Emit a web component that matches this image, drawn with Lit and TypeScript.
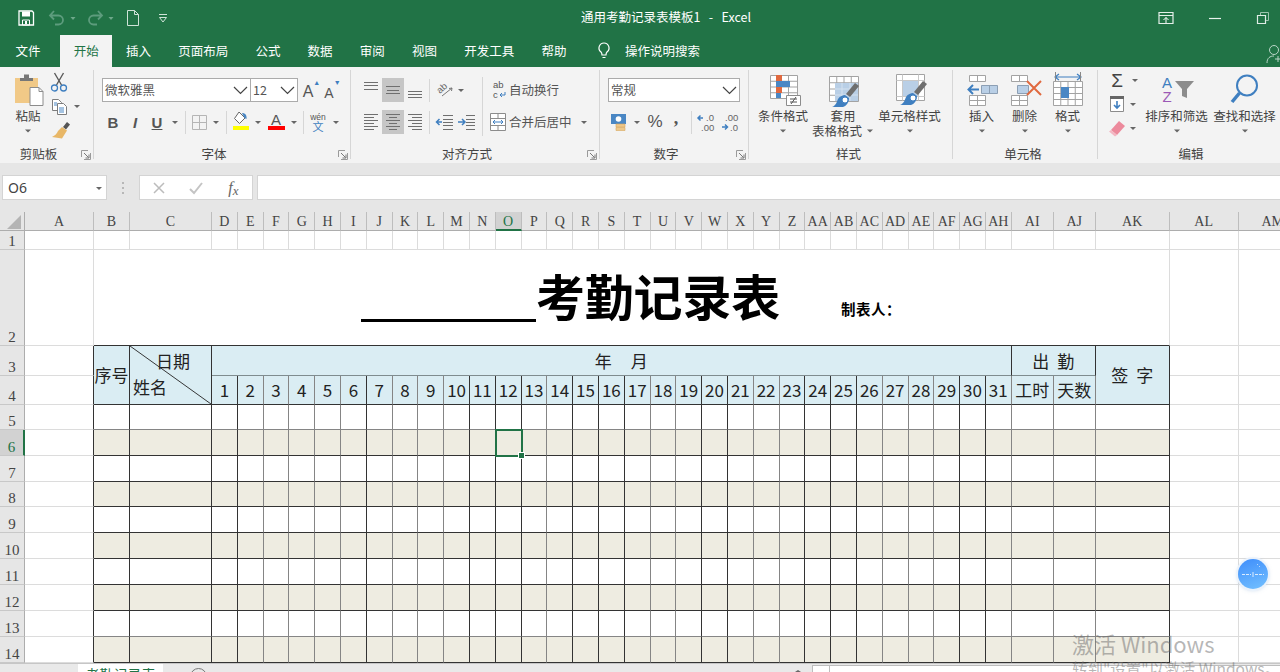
import { LitElement, css, html, svg } from "lit";
import { customElement } from "lit/decorators.js";

const GRAY = "#6f6f6f";

// every icon sets its own slot size, so the ribbon rows stay plain flex rows
const ic = (w: number, h: number, body: unknown) =>
  html`<svg class="ic" width=${w} height=${h} viewBox="0 0 ${w} ${h}">${body}</svg>`;

const caret = (w = 10, h = 24) =>
  ic(w, h, svg`<path d="M${w / 2 - 3} ${h / 2 - 1}h6l-3 3z" fill="#666"/>`);

const chevron = () =>
  ic(18, 22, svg`<path d="M2 8l6.5 6.5L15 8" fill="none" stroke="#444" stroke-width="1.2"/>`);

const launcher = () =>
  ic(10, 10, svg`<path d="M.5 7V.5H7M9.5 3v6.5H3" fill="none" stroke="#9a9a9a"/><path d="M3 3l4.5 4.5M8 4.5V8H4.5" fill="none" stroke="#777"/>`);

const lines = (ys: number[], spans: [number, number][]) =>
  svg`<path d=${ys.map((y, i) => `M${spans[i % spans.length][0]} ${y + 0.5}H${spans[i % spans.length][1]}`).join("")} stroke=${GRAY} fill="none"/>`;

const gridBox = (x: number, y: number, w: number, h: number, nx: number, ny: number) => {
  let d = `M${x + 0.5} ${y + 0.5}h${w}v${h}h${-w}z`;
  for (let i = 1; i < nx; i++) d += `M${x + 0.5 + (w * i) / nx} ${y}v${h}`;
  for (let i = 1; i < ny; i++) d += `M${x} ${y + 0.5 + (h * i) / ny}h${w}`;
  return svg`<path d=${d} fill="#fff" stroke="#a3a3a3"/>`;
};

const brush = (dx: number, dy: number) => svg`<g transform="translate(${dx} ${dy})">
  <path d="M24 0l4 3-9 11-4-3z" fill="#6e6e6e"/>
  <path d="M14 12l4 3c0 5-3 8-6 9H1c4-1 5-6 6-8 2-3 5-4 7-4z" fill="#3f7fc0"/>
  <circle cx="14" cy="17" r="3" fill="#fff" stroke="#3f7fc0"/>
</g>`;

const ICONS = {
  save: ic(18, 18, svg`<path d="M2 2h13l1.500 1.500V16H2z" fill="none" stroke="#fff" stroke-width="1.300"/><path d="M5 2.500h8v5H5z" fill="#fff"/><path d="M5.500 11h7v5h-7z" fill="none" stroke="#fff"/><path d="M8 12h2v3H8z" fill="#fff"/>`),
  undo: ic(20, 18, svg`<path d="M7 2L3 6.500l4 4M3.500 6.500h8a4.500 4.500 0 0 1 0 9H8" fill="none" stroke="#5d9c7d" stroke-width="1.800"/>`),
  redo: ic(20, 18, svg`<path d="M13 2l4 4.500-4 4M16.500 6.500h-8a4.500 4.500 0 0 0 0 9H12" fill="none" stroke="#5d9c7d" stroke-width="1.800"/>`),
  doc: ic(16, 18, svg`<path d="M2.500 1.500h7l4 4v11h-11zM9.500 1.500v4h4" fill="none" stroke="#cfe3d8"/>`),
  more: ic(14, 12, svg`<path d="M3 2.500h8" stroke="#cfe3d8"/><path d="M3.500 5.500h7L7 10z" fill="none" stroke="#cfe3d8"/>`),
  qcaret: ic(8, 12, svg`<path d="M1.500 5h5L4 8z" fill="#6ea88a"/>`),
  ribbonMode: ic(16, 14, svg`<path d="M1 1.500h14v11H1z" fill="none" stroke="#e4efe9" stroke-width="1.200"/><path d="M1 4.500h14" stroke="#e4efe9"/><path d="M8 12V6.500M5.500 9L8 6.500 10.500 9" fill="none" stroke="#fff"/>`),
  minimize: ic(14, 14, svg`<path d="M1 7.500h12" stroke="#e8f2ec" stroke-width="1.200"/>`),
  restore: ic(14, 14, svg`<path d="M1.500 4.500h8v8h-8z" fill="none" stroke="#dfece5" stroke-width="1.200"/><path d="M4.500 4V1.500h8v8H10" fill="none" stroke="#9dc3ae"/>`),
  person: ic(14, 20, svg`<circle cx="8" cy="6" r="4.500" fill="none" stroke="#b9d5c6"/><path d="M1 19c0-5 3-7 7-7M9 15h6M12 12v6" fill="none" stroke="#b9d5c6"/>`),
  bulb: ic(14, 20, svg`<path d="M7 3a5 5 0 0 0-3 9c.6.6 1 1.500 1 3h4c0-1.500.4-2.400 1-3a5 5 0 0 0-3-9zM5.500 17.500h3" fill="none" stroke="#fff" stroke-width="1.200"/>`),

  paste: ic(42, 36, svg`<path d="M8 6h23v25H8z" fill="#f1c987"/><path d="M13 6h13v3H13z" fill="#777"/><path d="M17 2.500h5V6h-5z" fill="#777"/>
    <path d="M23 15.500h9l4 4v14H23z" fill="#fff" stroke="#8c8c8c"/><path d="M32 15.500v4h4" fill="none" stroke="#8c8c8c"/>`),
  cut: ic(20, 24, svg`<path d="M5.500 3l7 12M14.500 3l-7 12" stroke="#5a5a5a" stroke-width="1.400"/><circle cx="5.500" cy="18" r="3" fill="none" stroke="#3f7fc0" stroke-width="1.300"/><circle cx="14.500" cy="18" r="3" fill="none" stroke="#3f7fc0" stroke-width="1.300"/>`),
  copy: ic(22, 24, svg`<path d="M3.500 5.500h6l3 3v8h-9z" fill="#fff" stroke="#7d7d7d"/><path d="M8.500 9.500h6l3 3v8h-9z" fill="#fff" stroke="#7d7d7d"/><path d="M5 9h3M5 11h3M10 14h5M10 16h5M10 18h5" stroke="#4a87c4"/>`),
  brush: ic(22, 24, svg`<path d="M14 9l4-5 3 2.500-4 5z" fill="#555"/><path d="M13 9l5 3.500-5 8-10-1.500c3-1.500 5-3.500 6-6z" fill="#e8b767"/>`),

  borders: ic(20, 24, svg`<path d="M3.500 5.500h14v14h-14zM10.500 5.500v14M3.500 12.500h14" fill="none" stroke="#b5b5b5"/>`),
  fill: ic(22, 24, svg`<path d="M9 2l6 6-5.500 5.500-5-5z" fill="#fff" stroke="#666"/><path d="M12 3c3 0 5 2 4.500 6l-2-1z" fill="#4a87c4"/><path d="M3 16h16v4H3z" fill="#ffff00"/>`),
  fontColor: ic(24, 24, svg`<text x="12" y="15" text-anchor="middle" font-family="Liberation Sans" font-size="15" fill="#555">A</text><path d="M4 16h17v4H4z" fill="#ff0000"/>`),
  wen: ic(22, 24, svg`<text x="11" y="9.500" text-anchor="middle" font-family="Liberation Sans" font-size="8.500" fill="#555">wén</text><text x="11" y="21" text-anchor="middle" font-family="Noto Sans CJK SC" font-size="11" fill="#3f7fc0">文</text>`),

  alignTop: ic(22, 24, lines([4, 7, 11], [[4, 18]])),
  alignMiddle: ic(22, 24, lines([8, 12, 15], [[4, 18], [5, 17], [4, 18]])),
  alignBottom: ic(22, 24, lines([13, 16, 19], [[4, 18]])),
  textLeft: ic(22, 24, lines([4, 7, 10, 13, 16, 19], [[4, 18], [4, 14]])),
  textCenter: ic(22, 24, lines([4, 7, 10, 13, 16, 19], [[4, 18], [7, 15]])),
  textRight: ic(22, 24, lines([4, 7, 10, 13, 16, 19], [[4, 18], [8, 18]])),
  orient: ic(24, 24, svg`<text transform="translate(7 16) rotate(-42)" font-family="Liberation Sans" font-size="9.500" fill="#666">ab</text><path d="M9 18l10-8M19 10l-3 .5M19 10l-.5 3" fill="none" stroke="#777"/>`),
  outdent: ic(22, 24, svg`${lines([5, 9, 12, 15, 19], [[10, 20]])}<path d="M9 12H4M6.500 9L3.500 12l3 3" fill="none" stroke="#3f7fc0" stroke-width="1.500"/>`),
  indent: ic(22, 24, svg`${lines([5, 9, 12, 15, 19], [[11, 20]])}<path d="M3 12h6M7 9l3 3-3 3" fill="none" stroke="#3f7fc0" stroke-width="1.500"/>`),
  wrap: ic(22, 24, svg`<text x="6" y="10" font-family="Liberation Sans" font-size="9.500" fill="#555">ab</text><text x="6" y="20" font-family="Liberation Sans" font-size="9.500" fill="#555">c</text><path d="M18 14v3h-5M15 15l-2 2 2 2" fill="none" stroke="#3f7fc0"/>`),
  merge: ic(22, 24, svg`<path d="M3.500 3.500h15v17h-15zM3.500 8.500h15M3.500 15.500h15M11 3.500v5M11 15.500v5M3.500 8.500v7" fill="#fff" stroke="#8c8c8c"/><path d="M6 12h10M8 10l-2 2 2 2M14 10l2 2-2 2" fill="none" stroke="#3f7fc0"/>`),

  currency: ic(20, 24, svg`<path d="M3 4h15v10H3z" fill="#4a87c4"/><circle cx="10.500" cy="9" r="2.800" fill="#fff"/><path d="M8 14h9v3H8zM8 17.500h9v3H8z" fill="#efc88a" stroke="#d9a95e" stroke-width=".6"/>`),
  decInc: ic(24, 24, svg`<path d="M8 8H3M5.500 5.500L3 8l2.500 2.500" fill="none" stroke="#3f7fc0" stroke-width="1.500"/><text x="11" y="11" font-family="Liberation Sans" font-size="9.500" fill="#666">.0</text><text x="6" y="21" font-family="Liberation Sans" font-size="9.500" fill="#666">.00</text>`),
  decDec: ic(24, 24, svg`<text x="6" y="11" font-family="Liberation Sans" font-size="9.500" fill="#666">.00</text><path d="M3 17h5M6 14.500L8.500 17 6 19.500" fill="none" stroke="#3f7fc0" stroke-width="1.500"/><text x="11" y="21" font-family="Liberation Sans" font-size="9.500" fill="#666">.0</text>`),

  condFormat: ic(36, 36, svg`${gridBox(5, 3, 27, 23, 3, 4)}
    <path d="M11 3h6v6h-6zM11 15h6v6h-6z" fill="#e0693f"/><path d="M11 9h14v6H11zM11 21h5v5h-5z" fill="#4a87c4"/>
    <path d="M21.500 23.500h14v10h-14z" fill="#fff" stroke="#8c8c8c"/><path d="M25 27h7M25 30h7M31 25l-5 7" stroke="#555" fill="none"/>`),
  tableFormat: ic(36, 36, svg`${gridBox(4, 4, 29, 25, 4, 4)}<path d="M10 11h23v18H10z" fill="#b9cfe6"/><path d="M17 11v18M25 11v18M10 17h23M10 23h23" stroke="#d4e1ef"/>${brush(6, 11)}`),
  cellStyles: ic(36, 36, svg`<path d="M4.500 2.500h28v26h-28z" fill="#fff" stroke="#a3a3a3"/><path d="M10.500 2.500v26M26.500 2.500v26M4.500 8.500h28M4.500 24.500h28" stroke="#c8c8c8"/><path d="M11 9h15v15H11z" fill="#b9cfe6"/>${brush(7, 9)}`),
  insert: ic(36, 36, svg`${gridBox(5, 3, 16, 6, 2, 1)}<path d="M17.500 13.500h16v8h-16zM25.500 13.500v8" fill="#b9cfe6" stroke="#8c9fb4"/><path d="M15 17.500H5M9 13l-4.500 4.500L9 22" fill="none" stroke="#3f7fc0" stroke-width="2"/>${gridBox(5, 23, 16, 10, 2, 2)}`),
  del: ic(36, 36, svg`${gridBox(4, 3, 16, 6, 2, 1)}<path d="M10.500 13.500h11v8h-11z" fill="#b9cfe6" stroke="#8c9fb4"/>${gridBox(4, 23, 16, 10, 2, 2)}<path d="M20 9l14 14M34 9L20 23" stroke="#e0693f" stroke-width="2"/>`),
  format: ic(36, 36, svg`<path d="M5 5h26M9 2l-4 3 4 3M27 2l4 3-4 3" fill="none" stroke="#3f7fc0" stroke-width="1.200"/><path d="M5.500 0v9M30.500 0v9" stroke="#888"/>${gridBox(3, 9, 29, 24, 4, 4)}<path d="M11 15h8v11h-8z" fill="#4a87c4"/>`),
  sigma: ic(26, 24, svg`<text x="13" y="19" text-anchor="middle" font-family="Liberation Sans" font-size="19" fill="#444">Σ</text>`),
  fillDown: ic(26, 24, svg`<path d="M6.500 4.500h13v15h-13z" fill="#fff" stroke="#8c8c8c"/><path d="M6 4h14v3H6z" fill="#666"/><path d="M13 9v7M10 13l3 3 3-3" fill="none" stroke="#3f7fc0" stroke-width="1.600"/>`),
  eraser: ic(26, 24, svg`<path d="M15 5l6 5-8 9-6-5z" fill="#ec8a9c"/><path d="M7 14l6 5-2 1.500-6-5z" fill="#f4b6c2"/>`),
  sort: ic(46, 36, svg`<text x="13" y="16" text-anchor="middle" font-family="Liberation Sans" font-size="15" fill="#3f7fc0">A</text><text x="13" y="30" text-anchor="middle" font-family="Liberation Sans" font-size="15" fill="#9b59b6">Z</text><path d="M21 9h19l-7 8v9l-5-2v-7z" fill="#8c8c8c"/>`),
  find: ic(36, 36, svg`<circle cx="20" cy="13.500" r="10" fill="none" stroke="#3f7fc0" stroke-width="2"/><path d="M12.500 21L5 30" stroke="#3f7fc0" stroke-width="3.500"/>`),
  cancel: ic(14, 14, svg`<path d="M2 2l10 10M12 2L2 12" stroke="#bcbcbc" stroke-width="1.500"/>`),
  enter: ic(16, 14, svg`<path d="M2 8l4 4 8-10" fill="none" stroke="#c4c4c4" stroke-width="2"/>`),
  sheetNext: ic(8, 8, svg`<path d="M4 6l-3 2h6z" fill="#666"/>`),
};

const COL_NAMES = [
  "A", "B", "C", "D", "E", "F", "G", "H", "I", "J", "K", "L", "M", "N", "O", "P", "Q", "R", "S", "T",
  "U", "V", "W", "X", "Y", "Z", "AA", "AB", "AC", "AD", "AE", "AF", "AG", "AH", "AI", "AJ", "AK", "AL", "AM",
];
const FIRST_DAY = 5; // grid column of D
const TABLE_FIRST = 3; // grid column of B
const TABLE_LAST = 38; // grid column of AK
const ACTIVE_COL = 16; // grid column of O
const ACTIVE_ROW = 6;
// the screenshot was downscaled, so some rules came out soft and gray
const SOFT_DAYS = new Set([2, 3, 4, 5, 7, 8, 9, 13, 17, 18, 21, 22, 26, 27, 28, 31]);
const SOFT_ROWS = new Set([5, 13]);

@customElement("app-root")
export class AppRoot extends LitElement {
  static styles = css`
    :host {
      display: block;
      width: 1280px;
      height: 672px;
      overflow: hidden;
      position: relative;
      font-family: "Noto Sans CJK SC", "Noto Sans", sans-serif;
      color: #444;
      background: #e6e6e6;
    }
    .ic { display: block; flex: none; }

    .titlebar {
      height: 35px;
      background: #217346;
      display: flex;
      align-items: center;
      color: #fff;
    }
    .qat { display: flex; align-items: center; width: 581px; padding-left: 17px; box-sizing: border-box; }
    .qat .tight { display: flex; align-items: center; gap: 2px; }
    .m8 { margin-left: 8px; }
    .m10 { margin-left: 10px; }
    .m12 { margin-left: 12px; }
    .m15 { margin-left: 15px; }
    .doc-title { font-size: 12.5px; white-space: pre; margin-top: -3px; }
    .win { margin-left: auto; display: flex; align-items: center; gap: 34px; padding-right: 10px; }

    .tabs {
      height: 32px;
      background: #217346;
      display: flex;
      align-items: stretch;
      font-size: 12.5px;
      color: #fff;
      padding-left: 2px;
    }
    .tab { padding: 0 13.6px 2px; display: flex; align-items: center; }
    .tab.file { margin-right: 6px; }
    .tab.on { background: #f3f3f3; color: #217346; }
    .tab.search { gap: 14px; padding-left: 17px; }
    .tabs .person { margin-left: auto; align-self: center; margin-top: 6px; }

    .ribbon { height: 96px; background: #f3f3f3; display: flex; font-size: 12.5px; }
    .group {
      flex: none;
      height: 89px;
      margin-top: 3px;
      display: flex;
      flex-direction: column;
      border-right: 1px solid #d6d6d6;
      box-sizing: border-box;
    }
    .g-clip { width: 94px; }
    .g-font { width: 257px; }
    .g-align { width: 249px; }
    .g-num { width: 149px; }
    .g-style { width: 204px; }
    .g-cell { width: 145px; }
    .g-edit { width: 182px; border-right: none; }
    .body { flex: 1; display: flex; min-height: 0; padding-top: 2px; }
    .label {
      height: 16px;
      margin: 0 0 -3px;
      display: flex;
      align-items: center;
      font-size: 12.5px;
      line-height: 16px;
      color: #444;
    }
    .label span { flex: 1; text-align: center; padding-right: 4px; }
    .g-edit .label span { padding: 0 0 0 4px; }
    .label .ic { margin: 2px 2px 0 0; }

    .big { flex: none; display: flex; flex-direction: column; align-items: center; line-height: 15px; }
    .big .cap { white-space: nowrap; display: flex; align-items: center; }
    .stack { display: flex; flex-direction: column; margin-top: -4px; }
    .stack.low { margin-top: -2px; }
    .row { display: flex; align-items: center; height: 24px; }

    .g-clip .body { padding-left: 7px; }
    .w-paste { width: 42px; }
    .w-52 { width: 52px; }
    .w-68 { width: 68px; }
    .w-65 { width: 65px; }
    .w-43 { width: 43px; }

    .col2 { display: flex; flex-direction: column; gap: 8px; padding-top: 6px; }
    .g-font .body, .g-num .body { padding-left: 8px; }
    .select {
      display: flex;
      align-items: center;
      height: 24px;
      box-sizing: border-box;
      background: #fff;
      border: 1px solid #ababab;
      font-size: 12.5px;
      padding-left: 2px;
      color: #555;
    }
    .select span { flex: 1; margin-top: -2px; }
    .s-font { width: 149px; }
    .s-size { width: 48px; margin-left: -1px; }
    .s-num { width: 132px; }
    .grow-a { font-size: 16px; font-family: "Liberation Sans", sans-serif; color: #555; display: flex; align-items: flex-end; width: 21px; justify-content: center; height: 22px; }
    .grow-a i { font-style: normal; font-size: 7px; color: #3f7fc0; line-height: 8px; align-self: flex-start; }
    .grow-first { margin-left: 3px; }
    .small-a { font-size: 14px; }
    .fmt {
      width: 22px;
      height: 24px;
      display: flex;
      align-items: center;
      justify-content: center;
      font: 700 15px "Liberation Sans", sans-serif;
      color: #555;
    }
    .fmt.i { font-style: italic; }
    .fmt.u { text-decoration: underline; }
    .vsep { width: 1px; height: 23px; background: #d6d6d6; flex: none; margin: 0 3px; }
    .on-bg { background: #c6c6c6; }

    .a-left { width: 129px; padding-left: 9px; box-sizing: border-box; }
    .a-sep { width: 1px; height: 59px; background: #d6d6d6; margin: 5px 0 0 2px; flex: none; }
    .a-right { padding-left: 4px; color: #555; }
    .a-right .row { white-space: nowrap; }
    .a-right .rt { margin-top: -2px; }
    .merge-caret { margin-left: 7px; }
    .pct { width: 18px; text-align: center; font: 17px "Liberation Sans", sans-serif; color: #555; }
    .comma { width: 24px; text-align: center; font: 700 18px "Liberation Serif", serif; color: #555; margin-top: -8px; }

    .g-style .body { padding-left: 8px; }
    .g-cell .body { padding-left: 7px; }
    .g-edit .body { padding-left: 6px; }
    .w-40 { width: 40px; }
    .edit-find { margin-left: 3px; }
    .cap-caret { margin-left: 4px; }

    .fbar { display: flex; padding: 12px 0 12px 2px; background: #e6e6e6; height: 25px; }
    .box { background: #fff; border: 1px solid #d4d4d4; box-sizing: border-box; height: 25px; display: flex; align-items: center; }
    .name { width: 105px; font: 14px "Noto Sans", sans-serif; padding-left: 5px; }
    .name span { flex: 1; }
    .dots { width: 32px; display: flex; justify-content: center; align-items: center; }
    .fn { width: 114px; }
    .fn span { flex: 1; display: flex; justify-content: center; }
    .fn .fx { font: italic 16px "Liberation Serif", serif; color: #666; display: block; text-align: center; }
    .fn .fx sub { font-size: 13px; line-height: 0; vertical-align: -2px; }
    .input { flex: 1; margin-left: 4px; border-right: none; }

    .sheet {
      height: 451px;
      overflow: hidden;
      background: #fff;
      display: grid;
      grid-template-columns: 25px 69px 36px 82px repeat(31, 25.806px) 42px 42px 74px 69px 69px;
      grid-template-rows: 19px 19px 96px 30px 29px 25px 26px 26px 25px 26px 26px 26px 26px 26px 26px;
    }
    .cell { box-sizing: border-box; border-right: 1px solid #dcdcdc; border-bottom: 1px solid #dcdcdc; min-width: 0; }
    .colh, .rowh {
      background: #e6e6e6;
      font: 14px "Liberation Serif", serif;
      color: #444;
      display: flex;
      justify-content: center;
      box-sizing: border-box;
      align-items: center;
    }
    .colh { border-right: 1px solid #bdbdbd; border-bottom: 1px solid #adadad; padding-top: 2px; }
    .rowh { border-right: 1px solid #adadad; border-bottom: 1px solid #c8c8c8; align-items: flex-end; line-height: 15px; font-size: 15px; }
    .corner { border-right: 1px solid #adadad; border-bottom: 1px solid #adadad; background: #e6e6e6; }
    .colh.sel { background: #d2d2d2; color: #217346; border-bottom: 2px solid #217346; }
    .rowh.sel { background: #d2d2d2; color: #217346; border-right: 2px solid #217346; }

    .edge { border-right-color: #333; }
    .title-cell {
      border-right: 1px solid #dcdcdc;
      border-bottom: 1px solid #333;
      display: flex;
      align-items: flex-end;
      padding: 0 0 18px 267px;
      color: #000;
      white-space: nowrap;
    }
    .blank-line { width: 175px; height: 3px; background: #000; flex: none; margin-bottom: 5px; }
    .big-title { font-size: 49px; font-weight: 700; line-height: 64px; letter-spacing: -0.2px; }
    .maker { font-size: 14.5px; font-weight: 700; margin: 0 0 8px 61px; line-height: 20px; letter-spacing: 0.5px; }

    .t {
      border-right: 1px solid #333;
      border-bottom: 1px solid #333;
      box-sizing: border-box;
      min-width: 0;
    }
    .t.soft-r { border-right-color: #858585; }
    .t.soft-b { border-bottom-color: #858585; }
    .th {
      background: #daedf3;
      color: #222;
      font-size: 17px;
      display: flex;
      align-items: center;
      justify-content: center;
      white-space: nowrap;
    }
    .th.up { padding-bottom: 2px; }
    .th.sp8 { gap: 8px; }
    .th.sp19 { gap: 19px; padding-left: 20px; }
    .th.mid { border-bottom-color: #7f8c8f; }
    .diag { position: relative; flex-direction: column; align-items: stretch; justify-content: flex-start; padding-top: 2px; line-height: 26px; }
    .diag svg { position: absolute; inset: 0; width: 100%; height: 100%; }
    .diag .d { text-align: right; padding-right: 21px; }
    .diag .n { padding-left: 3px; }
    .shade { background: #eeece1; }
    .active { position: relative; outline: 2px solid #217346; outline-offset: -1px; z-index: 1; }
    .active::after {
      content: "";
      position: absolute;
      right: -4px;
      bottom: -4px;
      width: 5px;
      height: 5px;
      background: #217346;
      border: 1px solid #fff;
    }

    .sheetbar {
      height: 9px;
      box-sizing: border-box;
      border-top: 1px solid #c6c6c6;
      background: #e9e9e9;
      display: flex;
      overflow: hidden;
    }
    .sheettab {
      margin-left: 78px;
      width: 85px;
      background: #fff;
      color: #217346;
      font-size: 14px;
      line-height: 20px;
      text-align: center;
      flex: none;
    }
    .plus { margin: 4px 0 0 27px; width: 15px; height: 15px; border: 1px solid #777; border-radius: 50%; flex: none; }
    .next { margin-left: 587px; }
    .hscroll { margin: 1px 0 0 10px; flex: 1; background: #fff; border-top: 1px solid #bdbdbd; border-left: 1px solid #bdbdbd; display: flex; }
    .thumb { width: 16px; border-right: 1px solid #bdbdbd; }

    .watermark {
      position: absolute;
      left: 1072px;
      top: 629px;
      color: rgba(110, 110, 110, 0.5);
      font-size: 22px;
      line-height: 28px;
      white-space: nowrap;
      pointer-events: none;
    }
    .watermark div + div { font-size: 15.5px; line-height: 22px; margin-top: 0; }
    .ball {
      position: absolute;
      left: 1238px;
      top: 559px;
      width: 30px;
      height: 30px;
      border-radius: 50%;
      background: linear-gradient(160deg, #3e8dfb, #74c1ff);
      box-shadow: 0 0 0 2px rgba(235, 243, 252, 0.9), 0 1px 4px rgba(120, 160, 210, 0.5);
    }
  `;

  private cellAt(row: number, col: number, rowSpan: number, colSpan: number, cls: string, content: unknown = "") {
    return html`<div class=${cls} style="grid-area:${row} / ${col} / span ${rowSpan} / span ${colSpan}">${content}</div>`;
  }

  private softCol(col: number) {
    return SOFT_DAYS.has(col - FIRST_DAY + 1) ? " soft-r" : "";
  }

  private renderSheet() {
    const out: unknown[] = [];
    const lastCol = COL_NAMES.length + 1;
    out.push(this.cellAt(1, 1, 1, 1, "corner", ic(24, 18, svg`<path d="M21 3v14H7z" fill="#b4b4b4"/>`)));
    COL_NAMES.forEach((name, i) => {
      const col = i + 2;
      out.push(this.cellAt(1, col, 1, 1, col === ACTIVE_COL ? "colh sel" : "colh", name));
    });
    for (let r = 1; r <= 14; r++) {
      out.push(this.cellAt(r + 1, 1, 1, 1, r === ACTIVE_ROW ? "rowh sel" : "rowh", r));
    }
    // row 1: plain gridlines
    for (let c = 2; c <= lastCol; c++) out.push(this.cellAt(2, c, 1, 1, "cell"));
    // row 2: merged title
    out.push(this.cellAt(3, 2, 1, 1, "cell"));
    out.push(
      this.cellAt(3, TABLE_FIRST, 1, TABLE_LAST - TABLE_FIRST + 1, "title-cell", html`
        <span class="blank-line"></span>
        <span class="big-title">考勤记录表</span>
        <span class="maker">制表人：</span>
      `),
    );
    for (let c = TABLE_LAST + 1; c <= lastCol; c++) out.push(this.cellAt(3, c, 1, 1, "cell"));
    // rows 3..14: margins either side of the table
    for (let r = 3; r <= 14; r++) {
      out.push(this.cellAt(r + 1, 2, 1, 1, "cell edge"));
      for (let c = TABLE_LAST + 1; c <= lastCol; c++) out.push(this.cellAt(r + 1, c, 1, 1, "cell"));
    }
    // table head
    out.push(this.cellAt(4, 3, 2, 1, "t th up", "序号"));
    out.push(
      this.cellAt(4, 4, 2, 1, "t th diag", html`
        <svg viewBox="0 0 82 59" preserveAspectRatio="none"><line x1="0" y1="0" x2="82" y2="59" stroke="#333" stroke-width="1"></line></svg>
        <div class="d">日期</div>
        <div class="n">姓名</div>
      `),
    );
    out.push(this.cellAt(4, FIRST_DAY, 1, 31, "t th sp19 mid", html`<span>年</span><span>月</span>`));
    out.push(this.cellAt(4, 36, 1, 2, "t th sp8 mid", html`<span>出</span><span>勤</span>`));
    out.push(this.cellAt(4, 38, 2, 1, "t th sp8 up", html`<span>签</span><span>字</span>`));
    for (let d = 1; d <= 31; d++) {
      const col = FIRST_DAY + d - 1;
      out.push(this.cellAt(5, col, 1, 1, `t th up${this.softCol(col)}`, d));
    }
    out.push(this.cellAt(5, 36, 1, 1, "t th up soft-r", "工时"));
    out.push(this.cellAt(5, 37, 1, 1, "t th up soft-r", "天数"));
    // table body, every second row shaded
    for (let r = 5; r <= 14; r++) {
      for (let c = TABLE_FIRST; c <= TABLE_LAST; c++) {
        const active = r === ACTIVE_ROW && c === ACTIVE_COL;
        const soft = this.softCol(c) + (c === 36 || c === 37 ? " soft-r" : "") + (SOFT_ROWS.has(r) ? " soft-b" : "");
        out.push(this.cellAt(r + 1, c, 1, 1, `t${r % 2 === 0 ? " shade" : ""}${soft}${active ? " active" : ""}`));
      }
    }
    return out;
  }

  private renderBig(icon: unknown, cls: string, label: string, second?: unknown) {
    return html`<div class="big ${cls}">${icon}<div class="cap">${label}</div>${second ?? caret(10, 15)}</div>`;
  }

  render() {
    return html`
      <div class="titlebar">
        <div class="qat">
          ${ICONS.save}
          <div class="tight m12">${ICONS.undo}${ICONS.qcaret}</div>
          <div class="tight m8">${ICONS.redo}${ICONS.qcaret}</div>
          <div class="m10">${ICONS.doc}</div>
          <div class="m15">${ICONS.more}</div>
        </div>
        <div class="doc-title">通用考勤记录表模板1   -   Excel</div>
        <div class="win">${ICONS.ribbonMode}${ICONS.minimize}${ICONS.restore}</div>
      </div>

      <div class="tabs">
        <div class="tab file">文件</div>
        <div class="tab on">开始</div>
        <div class="tab">插入</div>
        <div class="tab">页面布局</div>
        <div class="tab">公式</div>
        <div class="tab">数据</div>
        <div class="tab">审阅</div>
        <div class="tab">视图</div>
        <div class="tab">开发工具</div>
        <div class="tab">帮助</div>
        <div class="tab search">${ICONS.bulb}<span>操作说明搜索</span></div>
        <div class="person">${ICONS.person}</div>
      </div>

      <div class="ribbon">
        <div class="group g-clip">
          <div class="body">
            ${this.renderBig(ICONS.paste, "w-paste", "粘贴")}
            <div class="stack low">
              <div class="row">${ICONS.cut}</div>
              <div class="row">${ICONS.copy}${caret(12)}</div>
              <div class="row">${ICONS.brush}</div>
            </div>
          </div>
          <div class="label"><span>剪贴板</span>${launcher()}</div>
        </div>

        <div class="group g-font">
          <div class="body">
            <div class="col2">
              <div class="row">
                <div class="select s-font"><span>微软雅黑</span>${chevron()}</div>
                <div class="select s-size"><span>12</span>${chevron()}</div>
                <div class="grow-a grow-first">A<i>▲</i></div>
                <div class="grow-a small-a">A<i>▼</i></div>
              </div>
              <div class="row">
                <div class="fmt">B</div>
                <div class="fmt i">I</div>
                <div class="fmt u">U</div>
                ${caret(14)}
                <div class="vsep"></div>
                ${ICONS.borders}${caret(14)}
                <div class="vsep"></div>
                ${ICONS.fill}${caret(12)}${ICONS.fontColor}${caret(12)}
                <div class="vsep"></div>
                ${ICONS.wen}${caret(14)}
              </div>
            </div>
          </div>
          <div class="label"><span>字体</span>${launcher()}</div>
        </div>

        <div class="group g-align">
          <div class="body">
            <div class="col2 a-left">
              <div class="row">
                ${ICONS.alignTop}<div class="on-bg">${ICONS.alignMiddle}</div>${ICONS.alignBottom}
                <div class="vsep"></div>
                ${ICONS.orient}${caret(8)}
              </div>
              <div class="row">
                ${ICONS.textLeft}<div class="on-bg">${ICONS.textCenter}</div>${ICONS.textRight}
                <div class="vsep"></div>
                ${ICONS.outdent}${ICONS.indent}
              </div>
            </div>
            <div class="a-sep"></div>
            <div class="col2 a-right">
              <div class="row">${ICONS.wrap}<span class="rt">自动换行</span></div>
              <div class="row">${ICONS.merge}<span class="rt">合并后居中</span><span class="merge-caret">${caret(10)}</span></div>
            </div>
          </div>
          <div class="label"><span>对齐方式</span>${launcher()}</div>
        </div>

        <div class="group g-num">
          <div class="body">
            <div class="col2">
              <div class="row"><div class="select s-num"><span>常规</span>${chevron()}</div></div>
              <div class="row">
                ${ICONS.currency}${caret(18)}
                <div class="pct">%</div>
                <div class="comma">,</div>
                <div class="vsep"></div>
                ${ICONS.decInc}${ICONS.decDec}
              </div>
            </div>
          </div>
          <div class="label"><span>数字</span>${launcher()}</div>
        </div>

        <div class="group g-style">
          <div class="body">
            ${this.renderBig(ICONS.condFormat, "w-52", "条件格式")}
            ${this.renderBig(ICONS.tableFormat, "w-68", "套用", html`<div class="cap">表格格式<span class="cap-caret">${caret(8, 15)}</span></div>`)}
            ${this.renderBig(ICONS.cellStyles, "w-65", "单元格样式")}
          </div>
          <div class="label"><span>样式</span></div>
        </div>

        <div class="group g-cell">
          <div class="body">
            ${this.renderBig(ICONS.insert, "w-43", "插入")}
            ${this.renderBig(ICONS.del, "w-43", "删除")}
            ${this.renderBig(ICONS.format, "w-43", "格式")}
          </div>
          <div class="label"><span>单元格</span></div>
        </div>

        <div class="group g-edit">
          <div class="body">
            <div class="stack w-40">
              <div class="row">${ICONS.sigma}${caret(10)}</div>
              <div class="row">${ICONS.fillDown}${caret(6)}</div>
              <div class="row">${ICONS.eraser}${caret(6)}</div>
            </div>
            ${this.renderBig(ICONS.sort, "w-65", "排序和筛选")}
            ${this.renderBig(ICONS.find, "w-65 edit-find", "查找和选择")}
          </div>
          <div class="label"><span>编辑</span></div>
        </div>
      </div>

      <div class="fbar">
        <div class="box name"><span>O6</span>${caret(14, 22)}</div>
        <div class="dots">${ic(4, 14, svg`<path d="M2 1v2M2 6v2M2 11v2" stroke="#a8a8a8" stroke-width="1.500"/>`)}</div>
        <div class="box fn">
          <span>${ICONS.cancel}</span><span>${ICONS.enter}</span><span class="fx">f<sub>x</sub></span>
        </div>
        <div class="box input"></div>
      </div>

      <div class="sheet">${this.renderSheet()}</div>

      <div class="sheetbar">
        <div class="sheettab">考勤记录表</div>
        <div class="plus"></div>
        <div class="next">${ICONS.sheetNext}</div>
        <div class="hscroll"><div class="thumb"></div></div>
      </div>

      <div class="ball">${ic(30, 30, svg`<path d="M4 15.500h9M17 15.500h9" stroke="#dcecff" stroke-dasharray="3 1"/><path d="M15 13v5" stroke="#dcecff"/><path d="M19 5l4 4" stroke="#dcecff" stroke-dasharray="1 2"/>`)}</div>
      <div class="watermark">
        <div>激活 Windows</div>
        <div>转到"设置"以激活 Windows。</div>
      </div>
    `;
  }
}
